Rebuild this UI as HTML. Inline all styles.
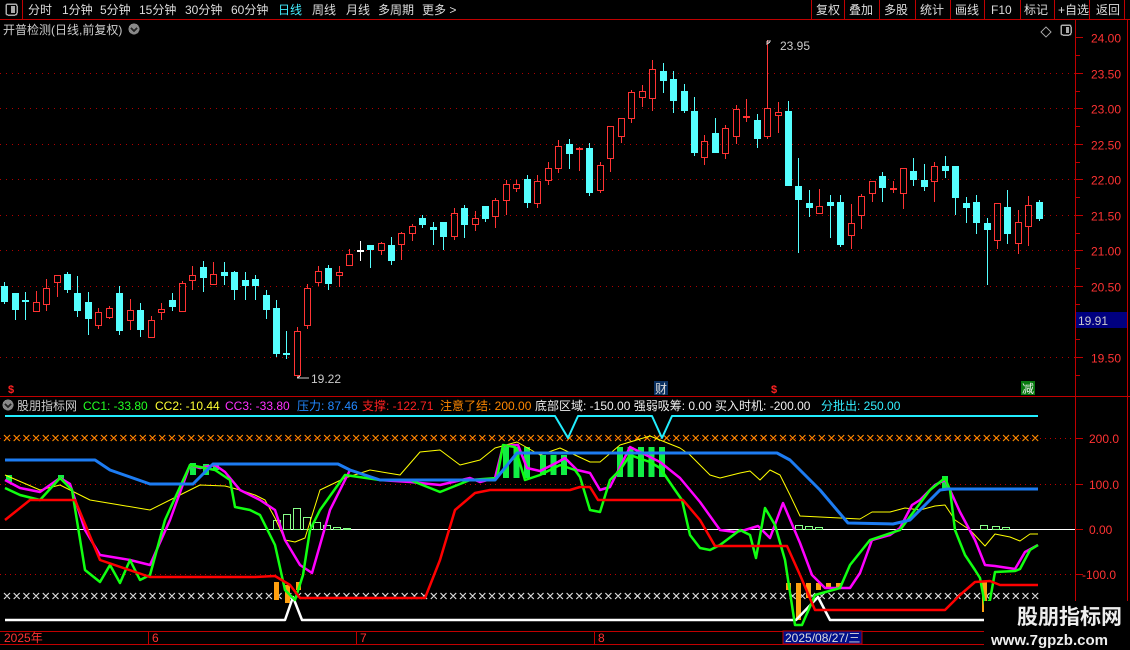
<!DOCTYPE html>
<html><head><meta charset="utf-8"><style>
html,body{margin:0;padding:0;background:#000;width:1130px;height:650px;overflow:hidden}
svg{display:block}
text{font-family:"Liberation Sans","Noto Sans CJK SC",sans-serif}
</style></head><body>
<svg id="s" width="1130" height="650" xmlns="http://www.w3.org/2000/svg" shape-rendering="crispEdges">
<rect width="1130" height="650" fill="#000"/>
<line x1="0" y1="19.5" x2="1130" y2="19.5" stroke="#c00000"/>
<line x1="22.5" y1="0" x2="22.5" y2="19" stroke="#c00000"/>
<rect x="6" y="4" width="11" height="11" rx="2" fill="none" stroke="#aaa" stroke-width="1.5"/>
<rect x="11" y="6" width="4" height="7" fill="#aaa"/>
<g font-size="12" fill="#ddd">
<text x="28" y="14">分时</text><text x="62" y="14">1分钟</text><text x="100" y="14">5分钟</text><text x="139" y="14">15分钟</text><text x="185" y="14">30分钟</text><text x="231" y="14">60分钟</text><text x="278" y="14" fill="#4ef">日线</text><text x="312" y="14">周线</text><text x="346" y="14">月线</text><text x="378" y="14">多周期</text><text x="422" y="14">更多 &gt;</text>
<text x="816" y="14">复权</text><text x="849" y="14">叠加</text><text x="884" y="14">多股</text><text x="920" y="14">统计</text><text x="955" y="14">画线</text><text x="991" y="14">F10</text><text x="1024" y="14">标记</text><text x="1058" y="14">+自选</text><text x="1096" y="14">返回</text>
</g>
<g stroke="#c00000"><line x1="811.5" y1="0" x2="811.5" y2="19"/><line x1="844.5" y1="0" x2="844.5" y2="19"/><line x1="879.5" y1="0" x2="879.5" y2="19"/><line x1="915.5" y1="0" x2="915.5" y2="19"/><line x1="950.5" y1="0" x2="950.5" y2="19"/><line x1="984.5" y1="0" x2="984.5" y2="19"/><line x1="1020.5" y1="0" x2="1020.5" y2="19"/><line x1="1054.5" y1="0" x2="1054.5" y2="19"/><line x1="1089.5" y1="0" x2="1089.5" y2="19"/><line x1="1124.5" y1="0" x2="1124.5" y2="19"/></g>
<text x="3" y="34" font-size="12" fill="#ccc">开普检测(日线,前复权)</text>
<circle cx="134" cy="29" r="5.5" fill="#888"/><path d="M131 28l3 3 3-3" stroke="#222" fill="none" stroke-width="1.5"/>
<path d="M1046 27l5 5-5 5-5-5z" fill="none" stroke="#999"/>
<rect x="1061" y="25" width="10" height="10" rx="2" fill="none" stroke="#aaa" stroke-width="1.5"/><rect x="1066" y="27" width="3" height="6" fill="#aaa"/>
<line x1="1075.5" y1="20" x2="1075.5" y2="644" stroke="#c00000"/>
<line x1="1127.5" y1="20" x2="1127.5" y2="644" stroke="#c00000"/>
<line x1="0" y1="396.5" x2="1130" y2="396.5" stroke="#c00000"/>
<line x1="0" y1="631.5" x2="1130" y2="631.5" stroke="#c00000"/>
<line x1="0" y1="644.5" x2="1130" y2="644.5" stroke="#c00000"/>
<g id="grid"></g>
<g id="candles"></g>
<g font-size="12" fill="#f33" id="plabels"></g>
<rect x="1076" y="312" width="51" height="16" fill="#000080"/>
<text x="1078" y="325" font-size="12" fill="#ccc">19.91</text>
<path d="M767 41h4M767 41v3l3-2" stroke="#ccc" fill="none"/><text x="780" y="50" font-size="12" fill="#ccc">23.95</text>
<path d="M297 378h12M297 378l3-2" stroke="#ccc" fill="none"/><text x="311" y="383" font-size="12" fill="#ccc">19.22</text>
<text x="8" y="393" font-size="11" fill="#f22" font-weight="bold">$</text>
<rect x="654" y="381" width="14" height="14" fill="#0a3060"/><text x="655" y="393" font-size="12" fill="#ddd">财</text>
<text x="771" y="393" font-size="11" fill="#f22" font-weight="bold">$</text>
<rect x="1021" y="381" width="14" height="14" fill="#087a10"/><text x="1022" y="393" font-size="12" fill="#eee">减</text>
<circle cx="8" cy="405" r="5.5" fill="#888"/><path d="M5 404l3 3 3-3" stroke="#222" fill="none" stroke-width="1.5"/>
<text y="410" font-size="12"><tspan x="17" fill="#ccc">股朋指标网</tspan><tspan x="83" fill="#2f2">CC1: -33.80</tspan><tspan x="155" fill="#ff3">CC2: -10.44</tspan><tspan x="225" fill="#f3f">CC3: -33.80</tspan><tspan x="297" fill="#28f">压力: 87.46</tspan><tspan x="362" fill="#f22">支撑: -122.71</tspan><tspan x="440" fill="#f80">注意了结: 200.00</tspan><tspan x="535" fill="#eee">底部区域: -150.00 强弱吸筹: 0.00 买入时机: -200.00</tspan><tspan x="821" fill="#3ef">分批出: 250.00</tspan></text>
<g font-size="12" fill="#f33"><text x="1089" y="443">200.0</text><text x="1089" y="489">100.0</text><text x="1089" y="534">0.00</text><text x="1082" y="579">-100.0</text></g>
<g stroke="#c00000"><line x1="1076" y1="438.5" x2="1083" y2="438.5"/><line x1="1076" y1="484.5" x2="1083" y2="484.5"/><line x1="1076" y1="529.5" x2="1083" y2="529.5"/><line x1="1076" y1="574.5" x2="1083" y2="574.5"/></g>
<line x1="0" y1="438.5" x2="1075" y2="438.5" stroke="#c00000" stroke-dasharray="1 4"/>
<line x1="0" y1="484.5" x2="1075" y2="484.5" stroke="#c00000" stroke-dasharray="1 4"/>
<line x1="0" y1="574.5" x2="1075" y2="574.5" stroke="#c00000" stroke-dasharray="1 4"/>
<line x1="0" y1="529.5" x2="1075" y2="529.5" stroke="#fff"/>
<path id="xo" fill="none" stroke="#f80" stroke-width="1.2" shape-rendering="auto"/>
<path id="xw" fill="none" stroke="#ddd" stroke-width="1.2" shape-rendering="auto"/>
<g id="bars"></g>
<g fill="none" shape-rendering="auto" stroke-linejoin="round">
<polyline stroke="#2ef" stroke-width="2" points="5,416 555,416 568,438 578,416 652,416 662,438 672,416 1038,416"/>
<polyline stroke="#fff" stroke-width="2.5" points="5,620 285,620 293,597 302,620 796,620 818,597 830,620 984,620"/>
<polyline stroke="#ff0" stroke-width="1" points="5,475 40,490 60,485 90,500 120,505 150,510 180,495 200,485 225,486 240,490 255,495 265,500 275,518 285,540 295,542 305,538 320,490 345,478 370,470 400,475 420,452 440,450 460,465 480,460 495,448 517,442 540,455 560,448 575,455 590,462 600,462 620,445 650,436 660,440 680,448 690,455 700,465 710,475 720,478 740,473 750,471 760,480 770,470 780,475 790,495 800,516 820,517 840,518 860,519 872,512 890,512 905,508 920,510 935,506 945,505 955,520 970,530 985,546 995,534 1010,537 1020,541 1030,534 1038,534"/>
<polyline stroke="#f0f" stroke-width="2.5" points="5,480 20,488 40,492 60,478 70,484 85,530 100,555 130,560 150,565 170,520 190,465 200,468 215,465 225,472 240,490 260,500 275,510 285,540 300,565 312,573 320,545 330,510 350,470 380,480 410,482 440,485 470,478 480,482 495,478 503,446 518,445 527,468 540,471 558,462 565,458 577,470 590,473 600,490 610,487 630,447 660,462 680,478 700,502 720,530 735,532 745,530 758,526 770,538 783,503 800,543 812,575 825,588 850,588 860,573 872,540 890,535 900,528 912,505 920,500 935,485 945,480 950,490 960,512 975,540 985,565 995,566 1015,569 1025,552 1038,545"/>
<polyline stroke="#1f1" stroke-width="2.5" points="5,488 20,495 40,500 60,478 72,490 85,570 100,582 110,565 120,583 130,560 140,580 150,575 165,520 190,465 215,470 230,480 235,507 250,510 260,515 275,545 285,590 295,600 303,575 310,530 320,510 345,475 380,480 410,480 440,492 470,480 497,478 503,445 515,447 525,480 540,475 560,465 575,470 580,477 590,510 600,512 610,480 620,470 630,455 650,462 660,468 675,490 682,500 690,535 700,548 710,550 720,545 740,530 750,535 756,558 765,508 775,525 785,560 795,625 802,625 815,595 840,588 850,565 870,540 900,530 930,490 945,478 950,490 955,530 965,555 975,570 980,578 985,605 990,600 995,572 1015,571 1020,569 1030,550 1038,545"/>
<polyline stroke="#1d7cf2" stroke-width="3" points="5,460 95,460 110,470 150,484 193,484 213,464 338,464 350,470 380,480 495,480 517,453 777,453 790,460 820,490 848,523 893,524 910,520 925,505 940,490 948,489 1038,489"/>
<polyline stroke="#f00" stroke-width="2.5" points="5,520 30,500 75,500 100,560 150,577 255,577 275,576 290,585 300,598 425,598 440,560 455,510 475,493 490,490 570,490 580,487 590,487 598,500 683,500 700,520 715,546 787,546 800,575 815,610 945,610 960,595 975,582 990,581 1000,585 1038,585"/>
</g>
<g font-size="12" fill="#f33"><text x="4" y="642">2025年</text><text x="152" y="642">6</text><text x="360" y="642">7</text><text x="598" y="642">8</text></g>
<g stroke="#c00000"><line x1="148.5" y1="631" x2="148.5" y2="644"/><line x1="356.5" y1="631" x2="356.5" y2="644"/><line x1="594.5" y1="631" x2="594.5" y2="644"/></g>
<rect x="783" y="631" width="79" height="13" fill="#00108a" stroke="#c00000"/>
<text x="785" y="642" font-size="12" fill="#ddd">2025/08/27/三</text>
<rect x="984" y="601" width="146" height="49" fill="#000"/>
<text x="1017" y="624" font-size="21" font-weight="bold" fill="#eee">股朋指标网</text>
<text x="991" y="645" font-size="15" font-weight="bold" fill="#eee">www.7gpzb.com</text>
</svg>
<script>
var NS="http://www.w3.org/2000/svg";
function el(p,t,a){var e=document.createElementNS(NS,t);for(var k in a)e.setAttribute(k,a[k]);p.appendChild(e);return e;}
var g=document.getElementById("grid"),pl=document.getElementById("plabels");
var prices=["24.00","23.50","23.00","22.50","22.00","21.50","21.00","20.50","19.50"];
var pv=[24,23.5,23,22.5,22,21.5,21,20.5,19.5];
for(var i=0;i<pv.length;i++){var y=Math.round(37+(24-pv[i])*71.1)+0.5;
 if(i>0)el(g,"line",{x1:0,y1:y,x2:1075,y2:y,stroke:"#b00000","stroke-dasharray":"1 5"});
 el(g,"line",{x1:1076,y1:y,x2:1083,y2:y,stroke:"#c00000"});
 var t=el(pl,"text",{x:1091,y:y+5});t.textContent=prices[i];}
for(var y=55;y<396;y+=35.5){el(g,"line",{x1:1076,y1:Math.round(y)+.5,x2:1080,y2:Math.round(y)+.5,stroke:"#c00000"});}
var A=[[318,366,306,372,'c'],[339,390,339,420,'c'],[360,366,336,420,'c'],[366,396,333,396,'r'],[324,375,297,393,'r'],[285,309,285,351,'r'],[282,330,276,339,'c'],[339,393,288,411,'c'],[366,417,336,465,'c'],[396,438,384,447,'r'],[384,414,378,417,'r'],[339,453,318,465,'c'],[390,423,357,450,'r'],[390,450,369,471,'c'],[420,474,408,474,'r'],[387,399,369,420,'r'],[360,381,339,393,'c'],[309,396,303,396,'r'],[285,303,258,330,'r'],[261,294,243,336,'c'],[282,315,246,315,'r'],[276,288,246,315,'c'],[276,330,273,360,'c'],[300,318,276,360,'c'],[297,318,285,360,'c'],[345,390,330,417,'c'],[384,522,360,531,'c'],[519,522,453,537,'c'],[453,588,441,591,'r'],[324,438,312,447,'r'],[273,309,258,318,'r'],[264,312,255,330,'c'],[276,288,258,321,'r'],[222,258,207,258,'r'],[210,213,183,243,'w'],[195,210,195,264,'c'],[189,213,186,225,'r'],[195,243,171,255,'c'],[159,195,156,240,'r'],[138,162,132,183,'r'],[114,135,105,144,'c'],[141,150,126,195,'c'],[126,171,126,210,'c'],[99,171,84,180,'r'],[84,135,75,174,'c'],[114,135,93,153,'r'],[78,117,78,126,'c'],[60,111,54,144,'r'],[12,63,0,105,'r'],[12,27,0,36,'r']];
var B=[[417,489,405,504,'c'],[423,492,405,504,'r'],[384,423,366,435,'r'],[318,387,300,399,'r'],[312,342,297,387,'c'],[324,330,321,393,'r'],[324,459,309,468,'c'],[375,453,366,459,'r'],[258,357,258,396,'r'],[234,291,234,309,'r'],[156,237,150,249,'r'],[153,174,135,201,'r'],[87,177,60,213,'r'],[93,123,69,159,'c'],[117,183,93,219,'c'],[153,213,132,219,'c'],[213,339,171,348,'c'],[303,354,285,375,'r'],[279,339,234,339,'c'],[264,342,255,357,'r'],[207,291,195,312,'r'],[228,234,177,246,'r'],[240,297,222,324,'c'],[204,291,0,297,'r'],[216,228,186,279,'r'],[213,438,183,438,'c'],[438,480,354,639,'c'],[489,504,450,531,'c'],[498,522,447,522,'r'],[486,498,465,594,'c'],[486,615,465,621,'c'],[549,588,492,627,'r'],[468,528,462,567,'r'],[423,462,423,486,'r'],[408,444,396,486,'c'],[444,450,423,459,'r'],[384,462,384,507,'r'],[393,420,354,438,'c'],[420,441,372,453,'c'],[378,426,366,486,'r'],[378,393,348,414,'c'],[378,474,378,525,'c'],[489,504,471,549,'c'],[486,549,465,582,'c'],[549,570,534,735,'c'],[489,603,489,627,'r'],[501,582,450,612,'c'],[546,611,510,642,'r'],[495,561,468,618,'r'],[486,537,480,543,'c']];
var cg=document.getElementById("candles");
function draw(arr,base,start){for(var i=0;i<arr.length;i++){var d=arr[i],x=Math.round(4.3+(start+i)*10.45);
 var t=Math.round(base+d[0]/3),b=Math.round(base+d[1]/3),h=Math.round(base+d[2]/3),l=Math.round(base+d[3]/3);
 var col=d[4]=='c'?'#55ffff':(d[4]=='w'?'#ffffff':'#ff3333');
 if(b-t<2){el(cg,"line",{x1:x+.5,y1:h,x2:x+.5,y2:l,stroke:col});el(cg,"rect",{x:x-3,y:t,width:7,height:2,fill:col});continue;}
 if(d[4]=='r'){el(cg,"line",{x1:x+.5,y1:h,x2:x+.5,y2:t,stroke:col});el(cg,"line",{x1:x+.5,y1:b,x2:x+.5,y2:l,stroke:col});el(cg,"rect",{x:x-2.5,y:t+.5,width:6,height:b-t-1,fill:"none",stroke:col});}
 else{el(cg,"line",{x1:x+.5,y1:h,x2:x+.5,y2:l,stroke:col});el(cg,"rect",{x:x-3,y:t,width:7,height:b-t,fill:col});}}}
draw(A,180,0);draw(B,40,50);
var po="",pw="";
for(var x=7;x<1040;x+=9.7){po+="M"+(x-3)+" 435l6 6M"+(x+3)+" 435l-6 6";
 pw+="M"+(x-3)+" 593l6 6M"+(x+3)+" 593l-6 6";}
document.getElementById("xo").setAttribute("d",po);
document.getElementById("xw").setAttribute("d",pw);
var bg=document.getElementById("bars");
function gb(x,t,b){el(bg,"rect",{x:x,y:t,width:6,height:b-t,fill:"#11ee44"});}
[[190,463,475],[203,464,475],[213,465,470],[58,475,480]].forEach(function(a){gb(a[0],a[1],a[2]);});
for(var x=503;x<=525;x+=10.45)gb(x,447,478);
for(var x=540;x<=565;x+=10.45)gb(x,455,475);
for(var x=617;x<=660;x+=10.45)gb(x,447,477);
gb(942,476,490);gb(6,475,482);
[[273,520],[283,514],[293,508],[303,517],[313,522],[323,525],[333,527],[343,528]].forEach(function(a){el(bg,"rect",{x:a[0]+.5,y:a[1]+.5,width:7,height:529-a[1],fill:"none",stroke:"#8f8"});});
[[795,525],[805,526],[815,527],[980,525],[992,526],[1002,527]].forEach(function(a){el(bg,"rect",{x:a[0]+.5,y:a[1]+.5,width:7,height:529-a[1],fill:"none",stroke:"#8f8"});});
function ob(x,t,b){el(bg,"rect",{x:x,y:t,width:5,height:b-t,fill:"#ffa010"});}
ob(274,582,600);ob(285,585,603);ob(296,582,590);
ob(786,583,590);ob(796,583,620);ob(806,583,598);ob(816,583,590);ob(826,583,588);ob(836,583,588);
ob(982,582,612);
</script>
</body></html>
